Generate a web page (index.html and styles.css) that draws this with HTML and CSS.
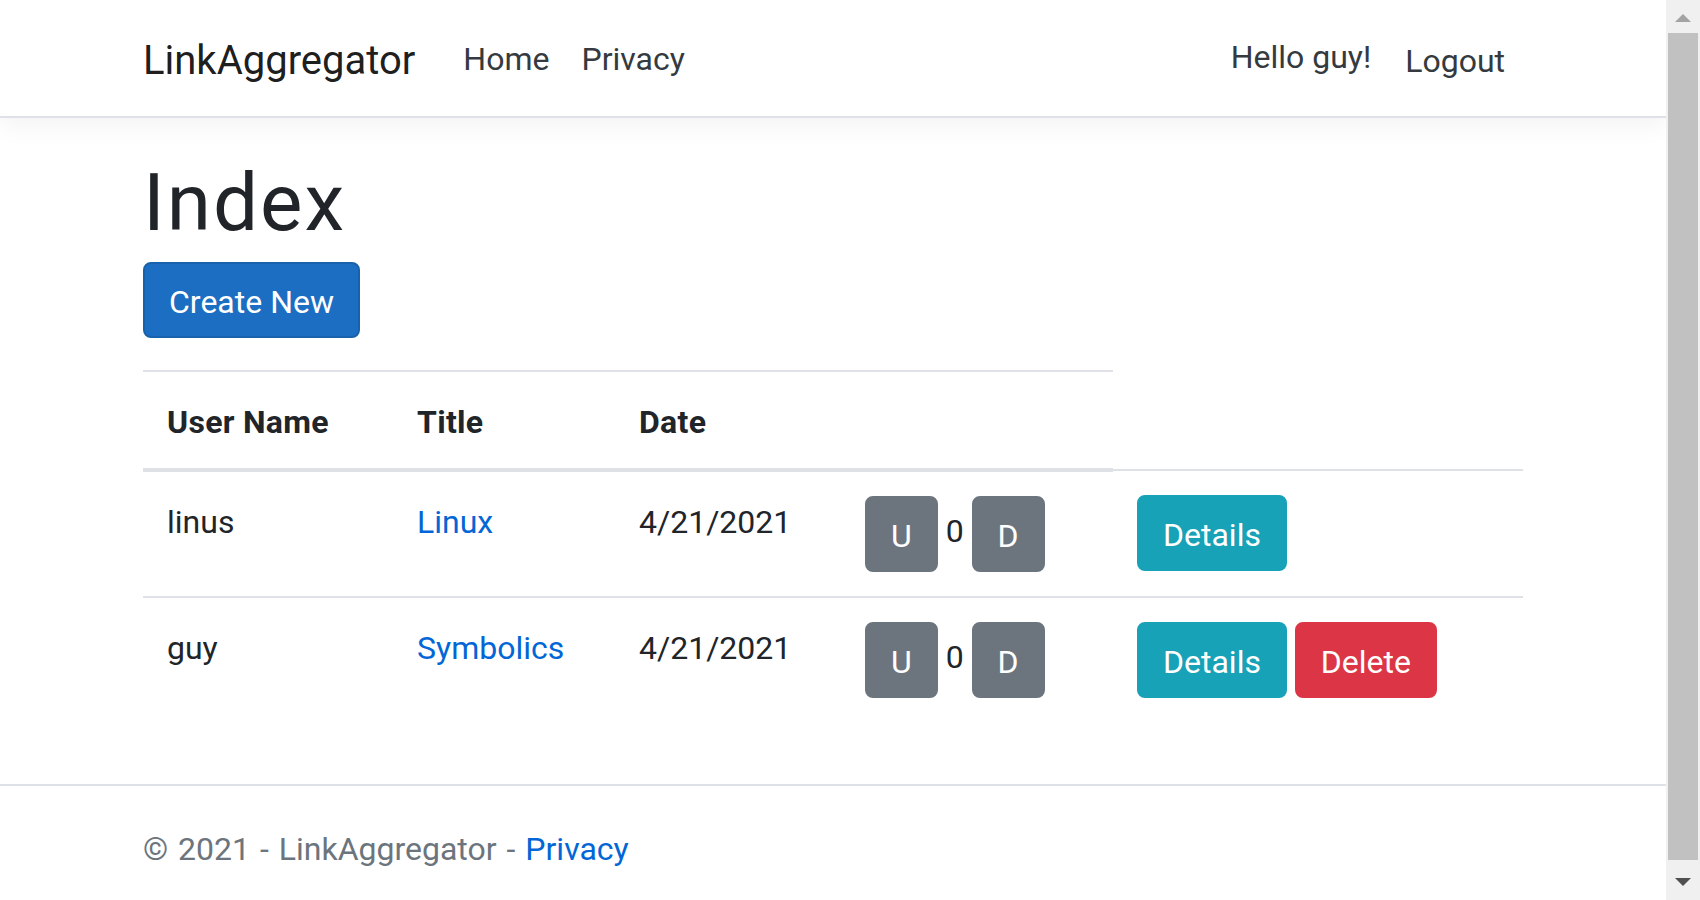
FILE: index.html
```html
<!DOCTYPE html>
<html lang="en">
<head>
<meta charset="utf-8">
<title>Index - LinkAggregator</title>
<link rel="stylesheet" href="styles.css">
</head>
<body>
<div class="page">
  <header class="navbar">
    <div class="container nav-inner">
      <a class="brand" href="#">LinkAggregator</a>
      <div class="nav-collapse">
        <ul class="nav-list nav-grow">
          <li><a class="nav-link" href="#">Home</a></li>
          <li><a class="nav-link" href="#">Privacy</a></li>
        </ul>
        <ul class="nav-list">
          <li><a class="nav-link nav-hello" href="#">Hello guy!</a></li>
          <li><form class="nav-form"><button type="button" class="nav-link nav-btn">Logout</button></form></li>
        </ul>
      </div>
    </div>
  </header>

  <div class="container main">
    <h1 class="title">Index</h1>
    <p class="create-line"><a class="btn btn-primary" href="#">Create New</a></p>
    <table class="table">
      <colgroup>
        <col class="col-user">
        <col class="col-title">
        <col class="col-date">
        <col class="col-votes">
        <col class="col-actions">
      </colgroup>
      <thead>
        <tr>
          <th>User Name</th>
          <th>Title</th>
          <th>Date</th>
          <th></th>
        </tr>
      </thead>
      <tbody>
        <tr>
          <td class="cell-text">linus</td>
          <td class="cell-text"><a href="#">Linux</a></td>
          <td class="cell-text">4/21/2021</td>
          <td><a class="btn btn-secondary" href="#">U</a> 0 <a class="btn btn-secondary" href="#">D</a></td>
          <td><a class="btn btn-info" href="#">Details</a></td>
        </tr>
        <tr>
          <td class="cell-text">guy</td>
          <td class="cell-text"><a href="#">Symbolics</a></td>
          <td class="cell-text">4/21/2021</td>
          <td><a class="btn btn-secondary" href="#">U</a> 0 <a class="btn btn-secondary" href="#">D</a></td>
          <td><a class="btn btn-info" href="#">Details</a> <a class="btn btn-danger" href="#">Delete</a></td>
        </tr>
      </tbody>
    </table>
  </div>

  <footer class="footer">
    <div class="container">&copy; 2021 - LinkAggregator - <a href="#">Privacy</a></div>
  </footer>
</div>

<div class="scrollbar">
  <div class="sb-up"><div class="arrow-up"></div></div>
  <div class="sb-thumb"></div>
  <div class="sb-down"><div class="arrow-down"></div></div>
</div>
</body>
</html>
```

FILE: styles.css
```css
* {
  box-sizing: border-box;
}

html,
body {
  margin: 0;
  height: 900px;
  overflow: hidden;
}

body {
  display: flex;
  font-family: Roboto, "Liberation Sans", sans-serif;
  font-size: 32px;
  line-height: 48px;
  color: #212529;
  background: #fff;
}

a {
  color: #0366d6;
  text-decoration: none;
}

.page {
  flex: 1;
  min-width: 0;
  height: 900px;
  overflow: hidden;
  display: flex;
  flex-direction: column;
}

.container {
  width: 1440px;
  margin: 0 auto;
  padding: 0 30px;
}

/* Navbar */
.navbar {
  flex: none;
  background: #fff;
  border-bottom: 2px solid #dee2e6;
  box-shadow: 0 8px 24px rgba(0, 0, 0, 0.05);
  padding: 16px 0;
  margin-bottom: 32px;
}

.nav-inner {
  display: flex;
  align-items: center;
}

.brand {
  font-size: 40px;
  line-height: 60px;
  padding: 13px 0 7px;
  margin-right: 32px;
  color: rgba(0, 0, 0, 0.9);
  white-space: nowrap;
}

.nav-collapse {
  display: flex;
  flex: 1;
}

.nav-list {
  display: flex;
  list-style: none;
  margin: 0;
  padding: 0;
}

.nav-grow {
  flex: 1;
}

.nav-link {
  display: block;
  padding: 19px 16px 13px;
  color: #343a40;
  font: inherit;
  white-space: nowrap;
}

.nav-hello {
  padding-top: 17px;
  padding-bottom: 15px;
}

.nav-form {
  margin: 0;
  display: flex;
  align-items: center;
}

.nav-btn {
  background: transparent;
  border: 2px solid transparent;
  border-radius: 8px;
  line-height: 48px;
  cursor: pointer;
}

/* Main */
.main {
  flex: none;
  padding-bottom: 30px;
}

.title {
  font-size: 80px;
  font-weight: 400;
  line-height: 96px;
  letter-spacing: 2px;
  padding-top: 5px;
  margin: 0 0 11px;
}

.create-line {
  display: flex;
  margin: 0 0 32px;
}

.btn {
  display: inline-block;
  padding: 14px 24px 10px;
  border: 2px solid transparent;
  border-radius: 8px;
  font-size: 32px;
  line-height: 48px;
  color: #fff;
  text-align: center;
  vertical-align: middle;
  white-space: nowrap;
}

.btn-primary {
  background: #1b6ec2;
  border-color: #1861ac;
}

.btn-secondary {
  background: #6c757d;
  border-color: #6c757d;
}

.btn-info {
  background: #17a2b8;
  border-color: #17a2b8;
}

.btn-danger {
  background: #dc3545;
  border-color: #dc3545;
}

/* Table */
.table {
  width: 100%;
  table-layout: fixed;
  border-collapse: collapse;
  margin-bottom: 32px;
}

.col-user { width: 250px; }
.col-title { width: 222px; }
.col-date { width: 226px; }
.col-votes { width: 272px; }
.col-actions { width: 410px; }

.table th,
.table td {
  padding: 24px;
  border-top: 2px solid #dee2e6;
  vertical-align: top;
  text-align: left;
  white-space: nowrap;
}

.table thead th {
  padding: 26px 24px 22px;
  vertical-align: bottom;
  border-bottom: 4px solid #dee2e6;
  font-weight: 700;
  letter-spacing: 0.3px;
}

.table td.cell-text {
  padding: 26px 24px 22px;
}

/* Footer */
.footer {
  flex: none;
  border-top: 2px solid #dee2e6;
  padding-top: 3px;
  line-height: 120px;
  color: #6c757d;
  white-space: nowrap;
  word-spacing: 2px;
}

/* Scrollbar */
.scrollbar {
  flex: none;
  width: 34px;
  height: 900px;
  background: #f0f0f0;
  display: flex;
  flex-direction: column;
  align-items: center;
}

.sb-up {
  flex: none;
  height: 33px;
  padding-top: 14px;
}

.sb-thumb {
  flex: 1;
  width: 30px;
  background: #c1c1c1;
}

.sb-down {
  flex: none;
  height: 40px;
  padding-top: 18px;
}

.arrow-up {
  width: 0;
  height: 0;
  border-left: 8px solid transparent;
  border-right: 8px solid transparent;
  border-bottom: 8px solid #a3a3a3;
}

.arrow-down {
  width: 0;
  height: 0;
  border-left: 8px solid transparent;
  border-right: 8px solid transparent;
  border-top: 8px solid #505050;
}
```
